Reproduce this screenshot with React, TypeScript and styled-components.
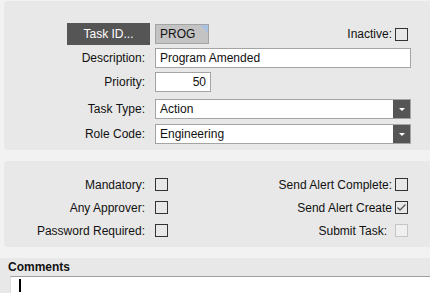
import React from 'react';
import styled, { createGlobalStyle } from 'styled-components';

const GlobalStyle = createGlobalStyle`
  html, body {
    margin: 0;
    padding: 0;
    background: #f2f2f3;
    overflow: hidden;
  }
  body {
    font-family: 'Liberation Sans', Arial, sans-serif;
    font-size: 12px;
    color: #111;
  }
`;

const Page = styled.div`
  width: 430px;
  height: 293px;
  padding-top: 1px;
  box-sizing: border-box;
  display: flex;
  flex-direction: column;
`;

const Panel = styled.div<{ $pt: number; $pb: number }>`
  background: #e8e8e8;
  border-radius: 4px;
  margin: 0 -6px 0 4px;
  padding: ${(p) => p.$pt}px 0 ${(p) => p.$pb}px 0;
  display: flex;
  flex-direction: column;
`;

const Spacer = styled.div`
  height: 11px;
  flex-shrink: 0;
`;

const FieldRow = styled.div<{ $mt?: number; $h: number }>`
  display: grid;
  grid-template-columns: 141px 256px;
  column-gap: 10px;
  align-items: center;
  height: ${(p) => p.$h}px;
  margin-top: ${(p) => p.$mt ?? 0}px;
`;

const Label = styled.label`
  text-align: right;
  white-space: nowrap;
`;

const TaskButton = styled.button`
  justify-self: end;
  margin-right: -5px;
  width: 83px;
  height: 22px;
  border: none;
  background: #555555;
  color: #fff;
  font: inherit;
  padding: 0;
`;

const TopLine = styled.div`
  display: flex;
  align-items: center;
  justify-content: space-between;
  padding-right: 3px;
`;

const CodeBox = styled.div`
  position: relative;
  width: 54px;
  height: 20px;
  box-sizing: border-box;
  border: 1px solid #a4a4a4;
  background: #c3c3c3;
  padding-left: 4px;
  line-height: 18px;
  &::after {
    content: '';
    position: absolute;
    top: 0;
    right: 0;
    border-style: solid;
    border-width: 0 8px 8px 0;
    border-color: transparent #a9c2e2 transparent transparent;
  }
`;

const InlineCheck = styled.div`
  display: flex;
  align-items: center;
  gap: 3px;
`;

const TextInput = styled.div<{ $w?: number; $align?: string }>`
  width: ${(p) => (p.$w ? `${p.$w}px` : '100%')};
  height: 20px;
  box-sizing: border-box;
  border: 1px solid #a4a4a4;
  background: #fff;
  padding: 0 4px;
  line-height: 18px;
  text-align: ${(p) => p.$align ?? 'left'};
`;

const Select = styled.div`
  display: flex;
  height: 20px;
  box-sizing: border-box;
  border: 1px solid #a4a4a4;
  background: #fff;
`;

const SelectValue = styled.div`
  flex: 1;
  padding-left: 4px;
  line-height: 18px;
`;

const SelectArrow = styled.div`
  width: 17px;
  background: #555555;
  display: flex;
  align-items: center;
  justify-content: center;
  &::before {
    content: '';
    border-style: solid;
    border-width: 3px 3px 0 3px;
    border-color: #fff transparent transparent transparent;
  }
`;

const Box = styled.span<{ $disabled?: boolean }>`
  display: inline-flex;
  align-items: center;
  justify-content: center;
  width: 13px;
  height: 13px;
  box-sizing: border-box;
  border: 1px solid ${(p) => (p.$disabled ? '#c6c6c6' : '#333')};
  background: ${(p) => (p.$disabled ? '#f0f0f0' : 'transparent')};
`;

const FlagRow = styled.div`
  display: grid;
  grid-template-columns: 151px 13px 1fr 13px;
  align-items: center;
  height: 23px;
  padding-right: 28px;
`;

const FlagLabel = styled.span<{ $gap: number }>`
  text-align: right;
  white-space: nowrap;
  padding-right: ${(p) => p.$gap}px;
`;

const CommentsArea = styled.div`
  flex: 1;
  background: #e8e8e8;
  display: flex;
  flex-direction: column;
  padding: 3px 0 0 0;
`;

const CommentsTitle = styled.div`
  font-weight: bold;
  padding-left: 8px;
  height: 12px;
  line-height: 12px;
`;

const CommentsBox = styled.div`
  flex: 1;
  margin: 3px 0 0 10px;
  background: #fff;
  border-top: 1px solid #a0a0a0;
  border-left: 1px solid #dcdcdc;
  padding: 2px 0 0 8px;
`;

const Caret = styled.div`
  width: 2px;
  height: 13px;
  background: #000;
`;

function Check({ checked, disabled }: { checked?: boolean; disabled?: boolean }) {
  return (
    <Box $disabled={disabled}>
      {checked && (
        <svg width="11" height="11" viewBox="0 0 11 11">
          <path d="M1.5 5.5 L4 8 L9.5 2.5" fill="none" stroke="#555" strokeWidth="1.3" />
        </svg>
      )}
    </Box>
  );
}

const flags = [
  { left: 'Mandatory:', right: 'Send Alert Complete:', checked: false, disabled: false, gap: 3 },
  { left: 'Any Approver:', right: 'Send Alert Create', checked: true, disabled: false, gap: 3 },
  { left: 'Password Required:', right: 'Submit Task:', checked: false, disabled: true, gap: 8 },
];

export default function App() {
  return (
    <Page>
      <GlobalStyle />
      <Panel $pt={22} $pb={6}>
        <FieldRow $h={22}>
          <TaskButton>Task ID...</TaskButton>
          <TopLine>
            <CodeBox>PROG</CodeBox>
            <InlineCheck>
              <span>Inactive:</span>
              <Check />
            </InlineCheck>
          </TopLine>
        </FieldRow>
        <FieldRow $mt={3} $h={20}>
          <Label>Description:</Label>
          <TextInput>Program Amended</TextInput>
        </FieldRow>
        <FieldRow $mt={4} $h={20}>
          <Label>Priority:</Label>
          <TextInput $w={56} $align="right">50</TextInput>
        </FieldRow>
        <FieldRow $mt={7} $h={20}>
          <Label>Task Type:</Label>
          <Select>
            <SelectValue>Action</SelectValue>
            <SelectArrow />
          </Select>
        </FieldRow>
        <FieldRow $mt={5} $h={20}>
          <Label>Role Code:</Label>
          <Select>
            <SelectValue>Engineering</SelectValue>
            <SelectArrow />
          </Select>
        </FieldRow>
      </Panel>
      <Spacer />
      <Panel $pt={12} $pb={5}>
        {flags.map((f) => (
          <FlagRow key={f.left}>
            <FlagLabel $gap={10}>{f.left}</FlagLabel>
            <Check />
            <FlagLabel $gap={f.gap}>{f.right}</FlagLabel>
            <Check checked={f.checked} disabled={f.disabled} />
          </FlagRow>
        ))}
      </Panel>
      <Spacer />
      <CommentsArea>
        <CommentsTitle>Comments</CommentsTitle>
        <CommentsBox>
          <Caret />
        </CommentsBox>
      </CommentsArea>
    </Page>
  );
}
